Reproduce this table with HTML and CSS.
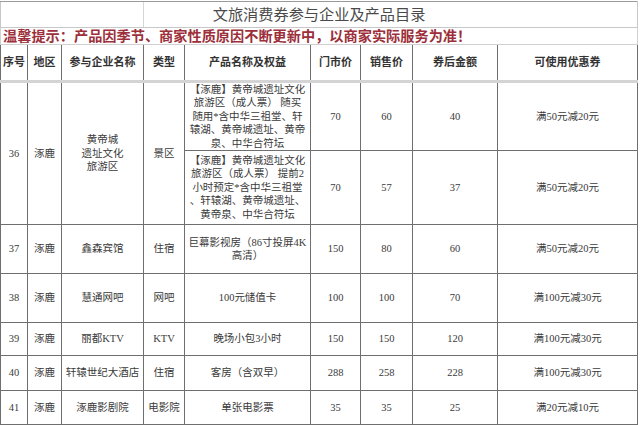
FILE: index.html
```html
<!DOCTYPE html>
<html lang="zh-CN">
<head>
<meta charset="utf-8">
<title>文旅消费券参与企业及产品目录</title>
<link rel="stylesheet" href="styles.css">
</head>
<body>
<table class="sheet">
  <colgroup>
    <col class="c1"><col class="c2"><col class="c3"><col class="c4"><col class="c5"><col class="c6"><col class="c7"><col class="c8"><col class="c9">
  </colgroup>
  <tr class="r-title"><td colspan="9" class="title">文旅消费券参与企业及产品目录</td></tr>
  <tr class="r-tip"><td colspan="9" class="tip">温馨提示：产品因季节、商家性质原因不断更新中，以商家实际服务为准！</td></tr>
  <tr class="r-head">
    <th>序号</th><th>地区</th><th>参与企业名称</th><th>类型</th><th>产品名称及权益</th><th>门市价</th><th>销售价</th><th>券后金额</th><th>可使用优惠券</th>
  </tr>
  <tr class="r36a first">
    <td rowspan="2">36</td><td rowspan="2">涿鹿</td><td rowspan="2">黄帝城<br>遗址文化<br>旅游区</td><td rowspan="2">景区</td>
    <td class="prod">【涿鹿】黄帝城遗址文化<br>旅游区（成人票）&nbsp;随买<br>随用*含中华三祖堂、轩<br>辕湖、黄帝城遗址、黄帝<br>泉、中华合符坛</td>
    <td>70</td><td>60</td><td>40</td><td>满50元减20元</td>
  </tr>
  <tr class="r36b">
    <td class="prod">【涿鹿】黄帝城遗址文化<br>旅游区（成人票）&nbsp;提前2<br>小时预定*含中华三祖堂<br>、轩辕湖、黄帝城遗址、<br>黄帝泉、中华合符坛</td>
    <td>70</td><td>57</td><td>37</td><td>满50元减20元</td>
  </tr>
  <tr class="r37">
    <td>37</td><td>涿鹿</td><td>鑫森宾馆</td><td>住宿</td><td class="prod">巨幕影视房（86寸投屏4K<br>高清）</td><td>150</td><td>80</td><td>60</td><td>满50元减20元</td>
  </tr>
  <tr class="r38">
    <td>38</td><td>涿鹿</td><td>慧通网吧</td><td>网吧</td><td>100元储值卡</td><td>100</td><td>100</td><td>70</td><td>满100元减30元</td>
  </tr>
  <tr class="r39">
    <td>39</td><td>涿鹿</td><td>丽都KTV</td><td>KTV</td><td>晚场小包3小时</td><td>150</td><td>150</td><td>120</td><td>满100元减30元</td>
  </tr>
  <tr class="r40">
    <td>40</td><td>涿鹿</td><td>轩辕世纪大酒店</td><td>住宿</td><td>客房（含双早）</td><td>288</td><td>258</td><td>228</td><td>满100元减30元</td>
  </tr>
  <tr class="r41">
    <td>41</td><td>涿鹿</td><td>涿鹿影剧院</td><td>电影院</td><td>单张电影票</td><td>35</td><td>35</td><td>25</td><td>满20元减10元</td>
  </tr>
  <tr class="r42">
    <td class="top"></td><td class="top"></td><td class="top"></td><td class="top">景区</td><td class="top">成人门票</td><td class="top"></td><td class="top"></td><td class="top"></td><td class="top">满50元减20元</td>
  </tr>
</table>
</body>
</html>
```
FILE: styles.css
```css
html, body {
  margin: 0;
  padding: 0;
  background: #ffffff;
}
body {
  font-family: "Liberation Serif", "Noto Sans CJK SC", serif;
  color: #3a3a3a;
  overflow: hidden;
  width: 640px;
  height: 425px;
}
.sheet {
  border-collapse: collapse;
  table-layout: fixed;
  width: 637px;
  margin-top: 1px;
}
.c1 { width: 27px; }
.c2 { width: 34px; }
.c3 { width: 82px; }
.c4 { width: 41px; }
.c5 { width: 126px; }
.c6 { width: 50px; }
.c7 { width: 52px; }
.c8 { width: 85px; }
.c9 { width: 140px; }

.sheet td, .sheet th {
  border: 1px solid #6f6f6f;
  text-align: center;
  vertical-align: middle;
  padding: 0 2px;
  font-size: 10.5px;
  line-height: 13.4px;
  font-weight: 400;
  white-space: nowrap;
  overflow: hidden;
}
.sheet th {
  font-size: 11px;
  font-weight: 700;
  color: #333;
}
.r-title td {
  height: 25px;
  font-size: 15.2px;
  color: #4a4a4a;
  border: 1px solid #c8c8c8;
  border-top-color: #9a9a9a;
  background: linear-gradient(#d6d6d6, #d6d6d6) 142px 0 / 1px 100% no-repeat;
}
.r-tip td {
  height: 16px;
  text-align: left;
  padding: 0 0 0 2px;
  font-size: 14.2px;
  line-height: 16px;
  font-weight: 700;
  color: #9c2f3a;
  border: 1px solid #d0d0d0;
}
.r-head th {
  height: 35px;
  border-top-color: #d0d0d0;
}
.first td {
  border-top: 3px solid #d4d4d4;
}
.r36a td { height: 62px; }
.r36b td { height: 73px; }
.r37 td { height: 48px; }
.r38 td { height: 48px; }
.r39 td { height: 32px; }
.r40 td { height: 34px; }
.r41 td { height: 33px; }
.r42 td { height: 30px; }
.sheet td.top { vertical-align: top; padding-top: 1px; }
.prod { white-space: nowrap; }
```
